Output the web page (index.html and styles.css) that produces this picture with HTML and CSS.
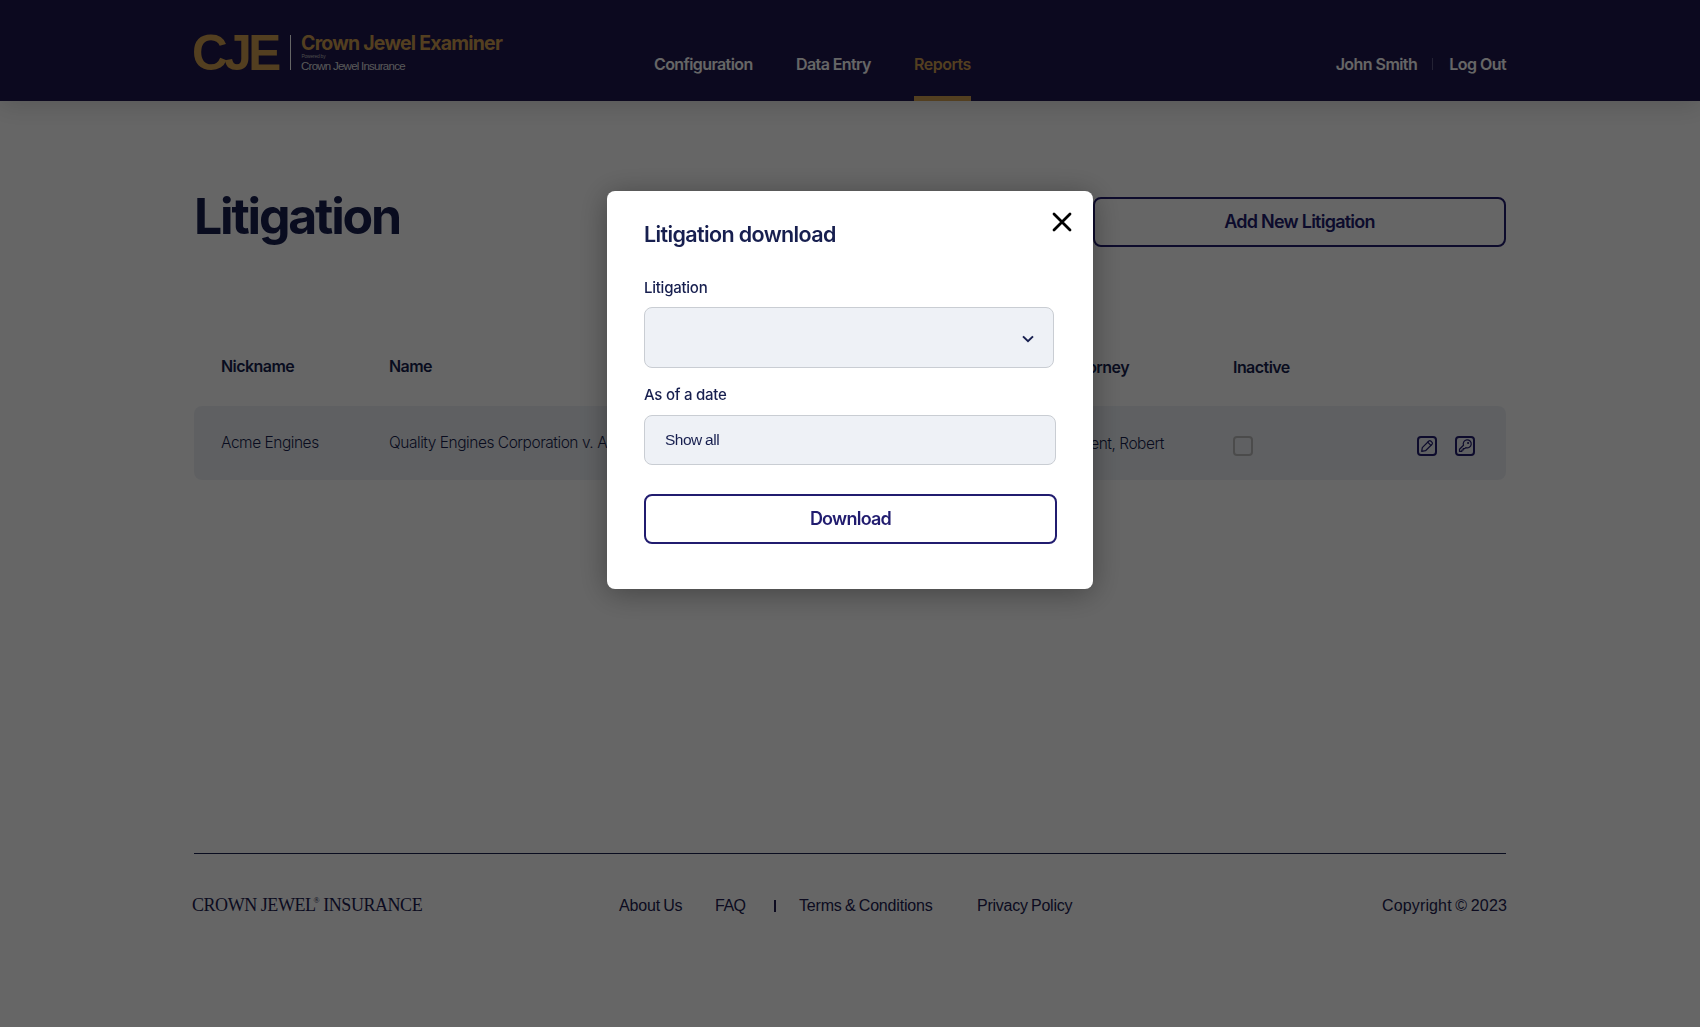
FILE: index.html
```html
<!DOCTYPE html>
<html lang="en">
<head>
<meta charset="utf-8">
<title>Litigation</title>
<link rel="stylesheet" href="styles.css">
</head>
<body>
<div class="page">
  <header class="header">
    <div class="container header-row">
      <a class="logo">
        <span class="logo-mark t">CJE</span>
        <span class="logo-text">
          <span class="logo-name t">Crown Jewel Examiner</span>
          <span class="logo-powered t">Powered by</span>
          <span class="logo-company t">Crown Jewel Insurance</span>
        </span>
      </a>
      <nav class="nav">
        <a class="nav-link"><span class="t">Configuration</span></a>
        <a class="nav-link"><span class="t">Data Entry</span></a>
        <a class="nav-link active"><span class="t">Reports</span></a>
      </nav>
      <div class="account">
        <a class="t">John Smith</a>
        <span class="account-sep"></span>
        <a class="t">Log Out</a>
      </div>
    </div>
  </header>

  <main class="container main">
    <div class="title-row">
      <h1 class="title"><span class="t">Litigation</span></h1>
      <button class="btn"><span class="t">Add New Litigation</span></button>
    </div>
    <div class="table">
      <div class="row head">
        <span><span class="t">Nickname</span></span>
        <span><span class="t">Name</span></span>
        <span class="low right"><span class="t">Attorney</span></span>
        <span class="low"><span class="t">Inactive</span></span>
      </div>
      <div class="row body">
        <span><span class="t">Acme Engines</span></span>
        <span><span class="t">Quality Engines Corporation v. A</span></span>
        <span class="low right wide"><span class="t">Bent, Robert</span></span>
        <span class="checkbox"></span>
        <span class="actions">
          <svg class="icon" viewBox="0 0 20 20"><rect x="1" y="1" width="18" height="18" rx="3"/><g class="thin"><path d="M4.7 15.4 5.3 11.6 11.9 5Q12.8 4.2 13.7 5L15.1 6.4Q15.9 7.3 15.1 8.2L8.5 14.7Z"/><path d="M10.7 6.2 13.9 9.4"/></g></svg>
          <svg class="icon" viewBox="0 0 20 20"><rect x="1" y="1" width="18" height="18" rx="3"/><g class="thin"><path d="M8.5 9.3A4 4 0 1 1 10.8 11.6L9.5 12.7H8.2V14H6.9V15.3H4.5V13.2Z"/><circle cx="13.1" cy="7" r=".5"/></g></svg>
        </span>
      </div>
    </div>
  </main>

  <footer class="container footer">
    <div class="brand"><span class="t">CROWN JEWEL<sup>®</sup> INSURANCE</span></div>
    <a><span class="t">About Us</span></a>
    <a><span class="t faq">FAQ</span></a>
    <span class="bar"></span>
    <a><span class="t">Terms &amp; Conditions</span></a>
    <a><span class="t privacy">Privacy Policy</span></a>
    <span class="copyright"><span class="t">Copyright © 2023</span></span>
  </footer>
</div>

<div class="overlay">
  <section class="modal">
    <svg class="close" viewBox="0 0 20 20"><path d="M2 2 18 18M18 2 2 18"/></svg>
    <h2 class="modal-title"><span class="t">Litigation download</span></h2>
    <label class="label"><span class="t">Litigation</span></label>
    <div class="select"><svg class="chevron" viewBox="0 0 12 8"><path d="M1 1.4 6 6.2 11 1.4"/></svg></div>
    <label class="label label-date"><span class="t">As of a date</span></label>
    <div class="input"><span class="t">Show all</span></div>
    <button class="btn download"><span class="t">Download</span></button>
  </section>
</div>
</body>
</html>
```

FILE: styles.css
```css
* { box-sizing: border-box; }

body {
  margin: 0;
  background: #fff;
  color: #171f4f;
  font: 16px/20px Inter, "Liberation Sans", sans-serif;
}

h1, h2, p { margin: 0; }

.t { white-space: nowrap; display: inline-block; }

.page { height: 1027px; overflow: hidden; }

.container { width: 1312px; margin: 0 auto; }

.header {
  height: 101px;
  background: #1e174e;
  color: #fff;
  box-shadow: 0 4px 24px rgba(0, 0, 0, .15);
}

.header-row { display: flex; height: 101px; letter-spacing: -.6px; }

.logo { display: flex; width: 460px; padding-top: 35px; color: #cf9e50; }

.logo-mark {
  width: 99px;
  height: 35px;
  margin-left: -2px;
  border-right: 1px solid #fff;
  font: bold 49.5px/36px "Liberation Sans", sans-serif;
  letter-spacing: -3.5px;
}

.logo-text { display: flex; flex-direction: column; align-items: flex-start; padding-left: 10px; }
.logo-name { margin-top: 1px; font-size: 19.5px; font-weight: 650; line-height: 15px; letter-spacing: -.78px; }
.logo-powered { margin-top: 3px; margin-left: .5px; color: #bbb; font: 5px/5px "Liberation Sans", sans-serif; letter-spacing: -.25px; }
.logo-company { margin-top: 1px; color: #ddd; font: 11.5px/12px "Liberation Sans", sans-serif; letter-spacing: -.75px; }

.nav { display: grid; grid-template-columns: 142px 118px 57px; }
.nav-link { height: 101px; padding-top: 54px; font-weight: 600; }
.active { border-bottom: 5px solid #cf9e50; color: #cf9e50; letter-spacing: -.5px; }

.account { display: flex; justify-content: flex-end; flex: 1; padding-top: 54px; font-weight: 600; letter-spacing: -.55px; }
.account-sep { width: 1px; height: 12px; margin: 4px 16px 0 15px; background: #5b5682; }

.title-row { display: flex; justify-content: space-between; padding-top: 96px; height: 241px; }
.title { margin-top: -6px; font-size: 50px; line-height: 50px; font-weight: 650; letter-spacing: -2.2px; }

.btn {
  height: 50px;
  width: 413px;
  padding: 0;
  border: 2px solid #211c6f;
  border-radius: 8px;
  background: none;
  color: #211c6f;
  font: 600 18px/22px Inter, sans-serif;
  letter-spacing: -.75px;
}

.row {
  display: grid;
  grid-template-columns: 168px 420px 424px 184px 1fr;
  padding-left: 27px;
  border-radius: 8px;
}
.head { height: 64px; padding-top: 14px; font-weight: 600; letter-spacing: -.55px; }
.body { height: 74px; padding-top: 26px; background: #eef1f6; font-size: 15.5px; line-height: 21px; font-weight: 350; letter-spacing: -.47px; }
.low { padding-top: 1px; }
.right { text-align: right; padding-right: 104px; }
.wide { padding-right: 69px; }
.checkbox { width: 20px; height: 20px; margin-top: 4px; border: 2px solid #bcbcbc; border-radius: 4px; }
.actions { display: flex; gap: 18px; margin-top: 4px; }
.icon { width: 20px; height: 20px; fill: none; stroke: #211c6f; stroke-width: 2; }
.thin { stroke-width: 1.2; stroke-linejoin: round; stroke-linecap: round; }

.footer {
  display: grid;
  grid-template-columns: 425px 96px 59px 25px 178px 1fr auto;
  margin-top: 373px;
  padding-top: 42px;
  border-top: 1px solid #171f4f;
  color: #211c50;
  font-family: "Liberation Sans", sans-serif;
  letter-spacing: -.17px;
  word-spacing: -1px;
}
.faq { letter-spacing: -.5px; }
.privacy { letter-spacing: -.24px; }
.brand { margin: -1px 0 0 -2px; font: 18px/20px "Liberation Serif", serif; letter-spacing: -.45px; word-spacing: 0; }
.brand sup { font-size: 8px; line-height: 0; vertical-align: 8px; margin-left: -2px; }
.bar { width: 1.5px; height: 12px; margin-top: 4px; background: #211c50; }
.copyright { margin-right: -1px; letter-spacing: .14px; }

.overlay {
  position: fixed;
  inset: 0;
  padding-top: 191px;
  background: rgba(0, 0, 0, .6);
}

.modal {
  position: relative;
  display: flex;
  flex-direction: column;
  width: 486px;
  height: 398px;
  margin: 0 auto;
  padding: 29px 36px 0 37px;
  border-radius: 8px;
  background: #fff;
  box-shadow: 0 4px 30px rgba(0, 0, 0, .35);
}
.close { position: absolute; left: 445px; top: 21px; width: 20px; height: 20px; stroke: #000; stroke-width: 2.8; stroke-linecap: round; }
.modal-title { font-size: 21.5px; line-height: 28px; font-weight: 600; letter-spacing: -.63px; }
.label { margin-top: 30px; font-size: 15px; font-weight: 500; letter-spacing: -.25px; }
.select {
  display: flex;
  align-items: center;
  justify-content: flex-end;
  width: 410px;
  height: 61px;
  margin-top: 9px;
  padding-right: 19px;
  border: 1px solid #c9cdd3;
  border-radius: 8px;
  background: #eef1f6;
}
.chevron { width: 12px; height: 8px; margin-top: 2px; fill: none; stroke: #171f4f; stroke-width: 2; }
.label-date { margin-top: 17px; }
.input {
  width: 412px;
  height: 50px;
  margin-top: 10px;
  padding: 14px 20px;
  border: 1px solid #c9cdd3;
  border-radius: 8px;
  background: #eef1f6;
  font: 15.5px/20px "Liberation Sans", sans-serif;
  letter-spacing: -.5px;
  word-spacing: -.5px;
}
.download { margin-top: 29px; }
```
